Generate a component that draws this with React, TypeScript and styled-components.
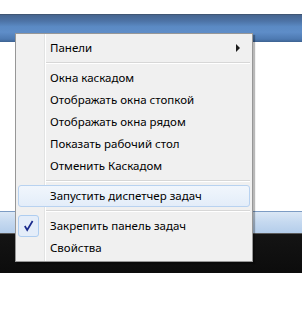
import React from 'react';
import styled, { createGlobalStyle } from 'styled-components';

const GlobalStyle = createGlobalStyle`
  html, body {
    margin: 0;
    padding: 0;
    background: #ffffff;
  }
  body {
    font-family: "Noto Sans", "DejaVu Sans", sans-serif;
  }
`;

const Screen = styled.div`
  position: relative;
  width: 302px;
  height: 312px;
  overflow: hidden;
  background: #ffffff;
`;

const Gap = styled.div<{ $h: number }>`
  height: ${(p) => p.$h}px;
`;

const WindowBar = styled.div`
  height: 28px;
  background: linear-gradient(
    #3a4758 0,
    #46658f 1px,
    #4d73a6 25%,
    #5b8ac4 45%,
    #5e8dc8 65%,
    #4d79b1 90%,
    #3d6290 100%
  );
`;

const TaskbarTop = styled.div`
  height: 22px;
  background: linear-gradient(#7d9cc4 0, #7d9cc4 1px, #dbe7f5 1px, #c5d9f0 50%, #b4cdea 100%);
`;

const TaskbarBody = styled.div`
  height: 40px;
  background: linear-gradient(#5a5a5a 0, #5a5a5a 1px, #141414 1px, #0c0c0c 100%);
`;

const Menu = styled.div`
  position: absolute;
  left: 15px;
  top: 33px;
  width: 236px;
  padding: 3px 0 2px;
  border: 1px solid #979797;
  box-shadow: 2px 2px 1px rgba(0, 0, 0, 0.28);
  background: linear-gradient(
    to right,
    #f0f0f0 28px,
    #e2e3e3 28px,
    #e2e3e3 29px,
    #ffffff 29px,
    #ffffff 30px,
    #f0f0f0 30px
  );
  font-size: 11.5px;
  color: #000000;
`;

const Item = styled.div<{ $hot?: boolean }>`
  display: flex;
  align-items: center;
  height: 20px;
  margin: 0 2px;
  border: 1px solid ${(p) => (p.$hot ? '#b8d2f0' : 'transparent')};
  border-radius: 3px;
  background: ${(p) => (p.$hot ? 'linear-gradient(#f1f6fc, #e3edf9)' : 'transparent')};
  white-space: nowrap;
`;

const IconCell = styled.div`
  width: 31px;
  height: 20px;
  display: flex;
  align-items: center;
  flex-shrink: 0;
`;

const CheckBox = styled.div`
  width: 19px;
  height: 20px;
  margin-left: -1px;
  border: 1px solid #aecdf0;
  border-radius: 3px;
  background: #e4edf9;
  display: flex;
  align-items: center;
  justify-content: center;
`;

const Label = styled.span`
  flex: 1;
  line-height: 20px;
`;

const Arrow = styled.span`
  width: 0;
  height: 0;
  margin-right: 9px;
  border-top: 4px solid transparent;
  border-bottom: 4px solid transparent;
  border-left: 4px solid #1b1b1b;
`;

const Separator = styled.div`
  height: 8px;
  margin-left: 30px;
  margin-right: 2px;
  display: flex;
  flex-direction: column;
  justify-content: center;
  &::before {
    content: '';
    height: 1px;
    background: #d7d7d7;
  }
  &::after {
    content: '';
    height: 1px;
    background: #ffffff;
  }
`;

const Check = () => (
  <svg width="11" height="12" viewBox="0 0 11 12">
    <path d="M1.8 6 L4.2 10 L9.6 1" fill="none" stroke="#1a2a8c" strokeWidth="1.7" />
  </svg>
);

interface MenuRowProps {
  label: string;
  hot?: boolean;
  checked?: boolean;
  submenu?: boolean;
}

const MenuRow = ({ label, hot, checked, submenu }: MenuRowProps) => (
  <Item $hot={hot}>
    <IconCell>
      {checked && (
        <CheckBox>
          <Check />
        </CheckBox>
      )}
    </IconCell>
    <Label>{label}</Label>
    {submenu && <Arrow />}
  </Item>
);

export default function App() {
  return (
    <Screen>
      <GlobalStyle />
      <Gap $h={14} />
      <WindowBar />
      <Gap $h={169} />
      <TaskbarTop />
      <TaskbarBody />
      <Menu>
        <MenuRow label="Панели" submenu />
        <Separator />
        <MenuRow label="Окна каскадом" />
        <MenuRow label="Отображать окна стопкой" />
        <MenuRow label="Отображать окна рядом" />
        <MenuRow label="Показать рабочий стол" />
        <MenuRow label="Отменить Каскадом" />
        <Separator />
        <MenuRow label="Запустить диспетчер задач" hot />
        <Separator />
        <MenuRow label="Закрепить панель задач" checked />
        <MenuRow label="Свойства" />
      </Menu>
    </Screen>
  );
}
